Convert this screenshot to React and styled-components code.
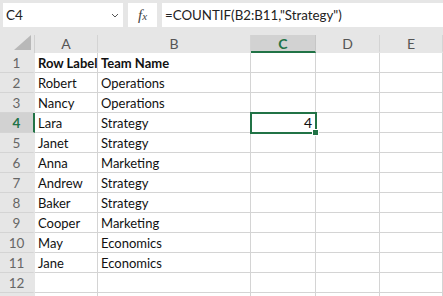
import styled, { createGlobalStyle } from 'styled-components'

const GlobalStyle = createGlobalStyle`
    html, body {
        margin: 0;
        padding: 0;
        background: #ffffff;
    }
    body {
        font-family: Lato, "Open Sans", sans-serif;
        width: 443px;
        height: 296px;
        overflow: hidden;
    }
`

const COLS = ['A', 'B', 'C', 'D', 'E']
const ACTIVE_COL = 'C'
const ACTIVE_ROW = 4

const rows = [
    ['Row Labels', 'Team Name'],
    ['Robert', 'Operations'],
    ['Nancy', 'Operations'],
    ['Lara', 'Strategy'],
    ['Janet', 'Strategy'],
    ['Anna', 'Marketing'],
    ['Andrew', 'Strategy'],
    ['Baker', 'Strategy'],
    ['Cooper', 'Marketing'],
    ['May', 'Economics'],
    ['Jane', 'Economics'],
    ['', ''],
    ['', ''],
]

export default function App() {
    return (
        <>
            <GlobalStyle />
            <Window>
                <FormulaBar>
                    <NameBox>
                        <span>C4</span>
                        <Chevron viewBox="0 0 8 5">
                            <path d="M1 1 L4 4 L7 1" fill="none" stroke="#555" strokeWidth="1" />
                        </Chevron>
                    </NameBox>
                    <FxBox>
                        <Fx>f<sub>x</sub></Fx>
                    </FxBox>
                    <FormulaInput>=COUNTIF(B2:B11,"Strategy")</FormulaInput>
                </FormulaBar>

                <Sheet>
                    <Corner>
                        <svg width="17" height="15" viewBox="0 0 17 15">
                            <polygon points="17,0 17,15 0,15" fill="#b8b8b8" />
                        </svg>
                    </Corner>
                    {COLS.map(c => (
                        <ColHeader key={c} $active={c === ACTIVE_COL}>{c}</ColHeader>
                    ))}

                    {rows.map((r, i) => {
                        const n = i + 1
                        return (
                            <Row key={n}>
                                <RowHeader $active={n === ACTIVE_ROW}>{n}</RowHeader>
                                <Cell $bold={n === 1}>{r[0]}</Cell>
                                <Cell $bold={n === 1}>{r[1]}</Cell>
                                {n === ACTIVE_ROW ? (
                                    <ActiveCell>
                                        4
                                        <FillHandle />
                                    </ActiveCell>
                                ) : (
                                    <Cell />
                                )}
                                <Cell />
                                <Cell />
                            </Row>
                        )
                    })}
                </Sheet>
            </Window>
        </>
    )
}

const Window = styled.div`
    width: 443px;
    height: 296px;
    overflow: hidden;
    background: #ffffff;
`

const FormulaBar = styled.div`
    display: flex;
    align-items: center;
    gap: 5px;
    height: 35px;
    padding: 3px 0 8px 3px;
    box-sizing: border-box;
    background: #e6e6e6;
`

const BoxBase = styled.div`
    height: 24px;
    background: #ffffff;
    display: flex;
    align-items: center;
    box-sizing: border-box;
`

const NameBox = styled(BoxBase)`
    width: 120px;
    padding: 0 4px 0 3px;
    justify-content: space-between;
    font-size: 13.5px;
    color: #222;
`

const Chevron = styled.svg`
    width: 8px;
    height: 5px;
`

const FxBox = styled(BoxBase)`
    width: 29px;
    justify-content: center;
`

const Fx = styled.span`
    font-family: "Liberation Serif", "DejaVu Serif", serif;
    font-style: italic;
    font-size: 15px;
    color: #444;
    line-height: 1;

    sub {
        font-size: 11px;
        vertical-align: baseline;
    }
`

const FormulaInput = styled(BoxBase)`
    flex: 1;
    padding-left: 3px;
    font-size: 13.3px;
    color: #222;
    white-space: nowrap;
`

const Sheet = styled.div`
    display: grid;
    grid-template-columns: 35px 63px 153px 65px 64px 63px;
    grid-auto-rows: 20px;
    grid-template-rows: 18px;
`

const Row = styled.div`
    display: contents;
`

const Corner = styled.div`
    background: #e6e6e6;
    display: flex;
    align-items: flex-end;
    justify-content: flex-end;
    padding: 0 3px 3px 0;
    border-right: 1px solid #d0d0d0;
    box-sizing: border-box;
`

const ColHeader = styled.div`
    display: flex;
    align-items: center;
    justify-content: center;
    font-size: 14px;
    box-sizing: border-box;
    background: ${p => (p.$active ? '#d2d2d2' : '#e6e6e6')};
    color: ${p => (p.$active ? '#217346' : '#555')};
    font-weight: ${p => (p.$active ? 700 : 400)};
    border-right: 1px solid ${p => (p.$active ? '#c6c6c6' : '#d4d4d4')};
    border-bottom: 2px solid ${p => (p.$active ? '#217346' : '#e6e6e6')};
    &:last-child {
        border-right: none;
    }
`

const RowHeader = styled.div`
    display: flex;
    align-items: center;
    justify-content: center;
    font-size: 13.5px;
    box-sizing: border-box;
    background: ${p => (p.$active ? '#d2d2d2' : '#e6e6e6')};
    color: ${p => (p.$active ? '#217346' : '#666')};
    font-weight: ${p => (p.$active ? 700 : 400)};
    border-bottom: 1px solid #d4d4d4;
    border-right: 2px solid ${p => (p.$active ? '#217346' : '#e6e6e6')};
`

const Cell = styled.div`
    display: flex;
    align-items: center;
    padding: 0 3px;
    box-sizing: border-box;
    font-size: 13px;
    color: #111;
    font-weight: ${p => (p.$bold ? 700 : 400)};
    white-space: nowrap;
    overflow: hidden;
    border-right: 1px solid #d4d4d4;
    border-bottom: 1px solid #d4d4d4;
`

const ActiveCell = styled(Cell)`
    position: relative;
    justify-content: flex-end;
    overflow: visible;
    font-size: 14px;
    outline: 2px solid #217346;
    outline-offset: -1px;
    z-index: 1;
`

const FillHandle = styled.span`
    position: absolute;
    right: -4px;
    bottom: -4px;
    width: 5px;
    height: 5px;
    background: #217346;
    border: 1px solid #ffffff;
`
